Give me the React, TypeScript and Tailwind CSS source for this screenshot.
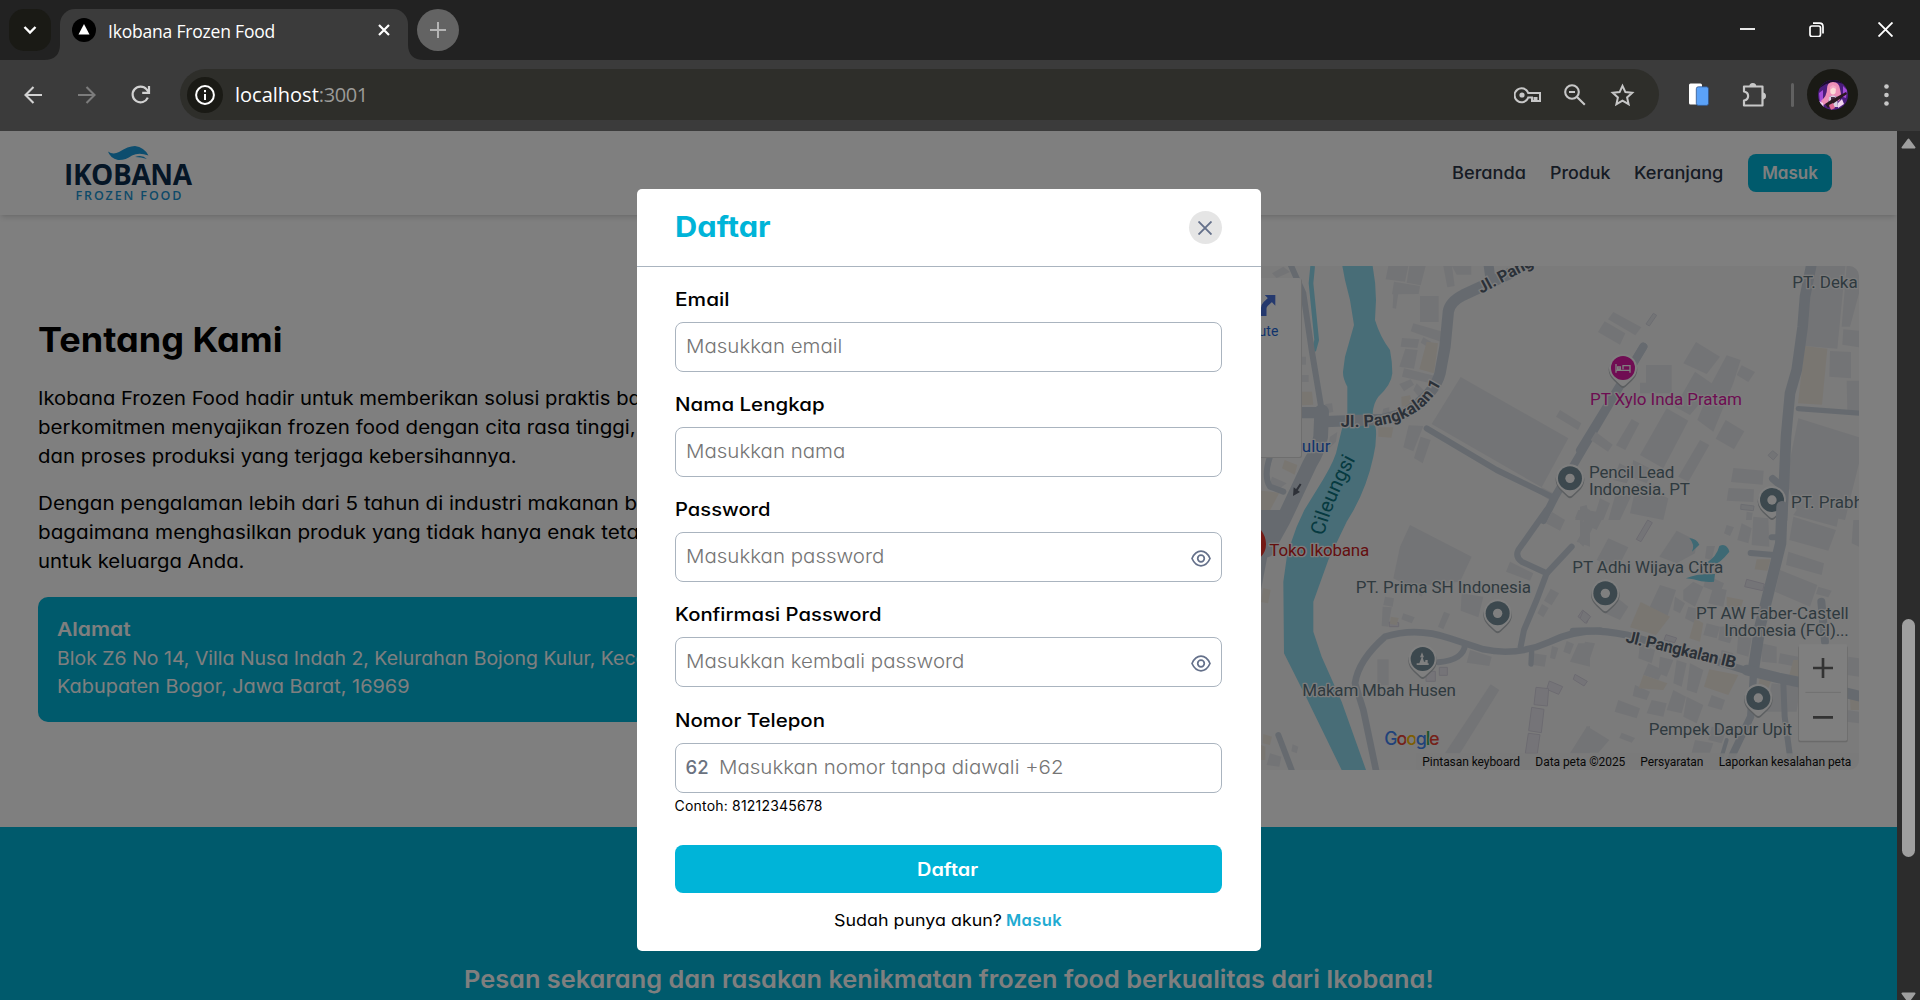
import type { ReactNode } from "react";

const P = ({ d, w = 20 }: { d: string; w?: number }) => (
  <path d={d} fill="none" stroke="#ccd5df" strokeWidth={w} strokeLinejoin="round" strokeLinecap="round" />
);

const Pin = ({ x, y, color = "#78909c", children }: { x: number; y: number; color?: string; children?: ReactNode }) => (
  <g transform={`translate(${x} ${y})`}>
    <path d="M-43 2A43 43 0 1 1 43 2Q42 20 27 34L7 53Q0 59 -7 53L-27 34Q-42 20 -43 2Z" fill="#b9bec2" transform="translate(0 4)" />
    <path d="M-42 0A42 42 0 1 1 42 0Q42 18 27 32L7 51Q0 57 -7 51L-27 32Q-42 18 -42 0Z" fill="#fff" />
    <circle r="36" fill={color} />
    {children ?? <circle r="14" fill="#fff" />}
  </g>
);

const T = ({ x, y, w, children, color = "#5f757f", size = 51 }: { x: number; y: number; w?: number; children: string; color?: string; size?: number }) => (
  <text x={x} y={y} textLength={w} fontSize={size} fill={color} stroke="#f8f8f8" strokeWidth="8" strokeLinejoin="round" paintOrder="stroke">
    {children}
  </text>
);

const Blocks = ({ list, fill = "#e7e8ec", stroke }: { list: string[]; fill?: string; stroke?: string }) => (
  <g fill={fill} stroke={stroke} strokeWidth="3">
    {list.map((points) => (
      <polygon key={points} points={points} />
    ))}
  </g>
);

function StreetMap() {
  return (
    <svg className="block h-full w-full rounded-[10px]" viewBox="967 266 892 504" fontFamily="Roboto, sans-serif">
      <rect x="967" y="266" width="892" height="504" fill="#f6f6f6" />
      {/* north-west quarter */}
      <g transform="translate(1250 250) scale(0.33333)">
        <Blocks
          list={[
            "415,48 475,48 465,95 407,88", "478,48 527,48 512,106 470,98", "432,95 510,108 506,132 426,133", "430,130 445,130 438,176 428,174",
            "510,138 566,138 566,216 510,216", "580,48 606,48 614,108 592,112", "606,48 664,48 664,74 620,74", "490,220 578,245 574,276 482,244",
            "456,264 508,268 502,294 452,290", "520,262 544,276 532,290 512,278", "466,296 503,300 492,356 448,350", "462,355 556,378 552,402 456,380",
            "448,402 482,388 492,404 462,424", "500,400 540,440 520,458 490,420", "400,476 418,472 418,496 396,494", "476,526 520,528 490,604 460,592",
            "512,560 542,570 518,640 492,624", "632,381 955,565 875,712 545,522", "930,480 994,520 984,540 918,500", "875,712 920,735 905,755 868,730",
            "1000,770 1020,780 1020,810 975,810", "226,462 246,460 250,486 228,490", "66,70 100,50 120,66 80,84", "154,320 168,320 168,344 154,344",
            "154,375 176,375 176,396 154,396", "240,560 262,546 258,575 232,600", "66,680 110,700 90,715 60,700",
          ]}
        />
        <Blocks fill="#f3ece2" list={["530,275 564,280 552,370 508,358", "385,532 430,532 424,563 385,560", "154,425 186,425 190,464 154,466", "454,440 480,436 490,465 455,470", "104,630 142,645 134,674 96,655", "33,722 88,728 50,800 33,800"]} />
        <path
          fill="#90daee"
          d="M277 48L368 48Q378 100 378 150L375 210Q390 260 420 300Q427 335 427 370Q424 405 385 440Q370 460 368 490L378 540Q380 580 370 620Q352 705 311 780L290 815L235 930L190 1055L190 1145L215 1220L275 1355L348 1560L275 1560L170 1345L102 1210L100 995L112 910L140 830L163 780L200 720Q245 650 258 610L275 540L292 490L292 410Q278 385 279 365L285 320L312 225L300 150L285 90Z"
        />
        <path d="M188 48L183 100L200 270L191 303" fill="none" stroke="#90daee" strokeWidth="14" />
        <P d="M120 40L160 130L185 300L215 480" w={18} />
        <P d="M140 488L215 488" w={34} />
        <P d="M215 485L212 560Q205 600 180 640L100 810L50 900" w={44} />
        <P d="M60 620Q40 680 60 710L100 725" w={18} />
        <P d="M225 515L400 508L470 488Q555 430 570 370L585 290L595 185Q600 155 640 135L780 70" w={34} />
        <P d="M715 40L722 90" w={30} />
        <P d="M530 535L740 660L915 745" w={18} />
        <P d="M880 810L915 740L1180 290" w={24} />
        <path id="pangkalan" d="M272 530L330 530Q520 528 580 385" fill="none" />
        <path id="river" d="M222 858Q240 770 325 612" fill="none" />
        <text fontSize="49" fontWeight="700" fill="#566271" stroke="#fafafa" strokeWidth="8" paintOrder="stroke" textLength="350">
          <textPath href="#pangkalan" textLength="350">Jl. Pangkalan 1</textPath>
        </text>
        <text fontSize="61" fill="#0d7480">
          <textPath href="#river">Cileungsi</textPath>
        </text>
        <text x="0" y="0" transform="translate(694 131) rotate(-28)" fontSize="49" fontWeight="700" fill="#566271" stroke="#fafafa" strokeWidth="8" paintOrder="stroke">
          Jl. Pangkalan
        </text>
        <T x={124} y={605} color="#1f68d8">Kulur</T>
        <path d="M152 702L139 722" stroke="#5c6370" strokeWidth="6" />
        <path d="M129 738L131 712L150 726Z" fill="#5c6370" />
        <rect x="-400" y="87" width="556" height="537" rx="6" fill="#dcdcdc" />
        <rect x="-400" y="84" width="553" height="537" rx="6" fill="#fff" />
        <path d="M41 198V176Q41 168 47 162L62 148" fill="none" stroke="#4a72dc" strokeWidth="17" />
        <path d="M44 135H76V167Z" fill="#4a72dc" />
        <text x="85" y="258" textAnchor="end" fontSize="42" fill="#1f68d8">Rute</text>
        <Pin x={960} y={685} />
      </g>
      {/* north-east quarter */}
      <g transform="translate(1580 250) scale(0.33333)">
        <Blocks
          list={[
            "100,186 184,232 166,256 84,208", "74,214 136,250 120,284 54,246", "348,276 420,320 380,372 310,340", "198,345 275,345 275,430 180,430 180,398 198,398",
            "440,316 482,330 460,400 400,545 352,510 385,430 330,495 285,470 345,365 395,400", "485,346 525,366 505,396 470,375", "260,475 325,512 250,655 180,615",
            "155,507 178,520 136,600 108,586", "437,510 493,544 462,598 407,566", "360,570 388,585 325,695 295,680", "40,540 98,584 84,605 32,570",
            "460,654 551,662 548,704 453,696", "446,714 522,718 520,756 440,752", "690,48 796,48 772,296 674,288", "800,48 837,48 837,130 810,230 785,230",
            "790,238 837,242 837,292 787,284", "750,303 813,306 813,385 748,380", "800,392 837,392 837,485 802,480", "655,505 837,562 837,640 795,810 650,780 618,690",
            "500,785 518,788 515,810 498,810", "118,640 160,660 140,700 100,690", "160,630 220,660 200,700 150,680", "0,770 20,765 30,810 0,810",
            "60,745 90,760 70,810 40,810", "110,720 155,735 120,810 85,810", "170,700 265,745 250,810 150,790",
          ]}
        />
        <Blocks stroke="#d9dbe3" list={["220,190 230,196 208,228 198,222", "578,602 593,614 580,630 564,616", "483,763 522,768 520,782 482,778"]} />
        <Blocks fill="#f3ece2" list={["674,288 742,296 726,464 654,460"]} />
        <P d="M0 600L190 290" w={24} />
        <P d="M695 40L675 140L668 230L650 360L630 430L618 560L612 700L606 810" w={32} />
        <P d="M655 476L845 490" w={16} />
        <P d="M578 686L606 710" w={22} />
        <T x={637} y={115} w={196}>PT. Deka</T>
        <T x={30} y={465} w={456} color="#db1aa4">PT Xylo Inda Pratam</T>
        <T x={27} y={685} w={256}>Pencil Lead</T>
        <T x={27} y={736} w={303}>Indonesia. PT</T>
        <Pin x={129} y={354} color="#e01ba6">
          <path d="M-21-12V14M-21 7H21M21 14V-7H0V4M-16-3h8v6h-8z" fill="none" stroke="#fff" strokeWidth="4" />
        </Pin>
        <Pin x={576} y={750} />
        <T x={633} y={775}>PT. Prabh</T>
      </g>
      {/* south-west quarter */}
      <g transform="translate(1250 510) scale(0.33333)">
        <Blocks
          list={[
            "480,45 665,140 630,215 530,225 515,260 470,225 430,205 450,110", "635,250 700,260 685,322 632,302", "405,260 432,265 428,290 400,285", "398,290 425,292 415,350 395,348",
            "460,310 494,322 485,340 454,328", "582,305 600,312 580,358 564,350", "382,448 416,448 416,526 382,526", "780,155 850,190 840,212 768,185",
            "902,236 927,250 905,286 882,272", "876,282 896,294 880,322 862,310", "660,420 725,440 718,468 650,458", "850,430 890,436 884,470 850,465",
            "906,408 925,414 915,448 900,444", "950,393 972,402 960,433 940,425", "722,523 748,540 630,730 585,730", "985,400 1020,400 1020,470 960,455",
            "905,5 945,30 930,62 888,40", "985,0 1010,0 1000,35 975,25", "1000,60 1020,40 1020,110 980,95", "60,730 94,740 88,770 50,765", "128,703 145,710 140,730 124,724",
            "1010,650 1020,648 1020,730 960,730",
          ]}
        />
        <Blocks stroke="#d9d6e2" fill="#ebe9f0" list={["998,300 1020,318 1010,340 984,320", "568,472 592,472 592,496 568,496", "528,484 556,484 556,514 528,514", "898,513 938,530 926,553 890,538", "858,532 896,536 892,588 852,584", "845,592 882,598 874,668 836,662", "835,670 870,674 862,730 826,730", "975,493 1012,514 1002,528 970,508", "418,336 446,338 446,350 418,350"]} />
        <Blocks fill="#f3ece2" list={["422,320 446,324 440,345 420,342", "40,234 62,240 54,280 33,276", "40,672 66,680 60,705 38,700", "33,705 46,710 46,750 33,750"]} />
        <path d="M33 0H120Q100 60 60 100Q50 150 33 240Z" fill="#ccd5df" />
        <P d="M380 790L340 600L315 520Q325 450 405 380Q500 350 600 385L700 418Q800 440 900 395Q960 365 1050 362" w={20} />
        <P d="M890 0L805 120Q795 140 815 155L890 190L965 110" w={18} />
        <P d="M890 190L860 270L822 360L812 410" w={18} />
        <P d="M565 457Q640 450 645 405" w={18} />
        <P d="M845 425L843 462" w={16} />
        <P d="M85 675L125 780" w={18} />
        <path d="M0 60H33Q48 80 48 102Q48 125 33 140H0Z" fill="#e8352b" />
        <T x={58} y={138} w={300} color="#c9211e">Toko Ikobana</T>
        <T x={317} y={249} w={526}>PT. Prima SH Indonesia</T>
        <Pin x={743} y={310} />
        <Pin x={518} y={447}>
          <path d="M-18 18V13H-10L-3-5L-8-5L-2-20L4-5L0-5L4 8H8V3H15V13H18V18Z" fill="#fff" />
        </Pin>
        <T x={157} y={558} w={461}>Makam Mbah Husen</T>
        <text x="403" y="706" fontSize="54" fontFamily="Inter, sans-serif" fontWeight="500" textLength="166" stroke="#f6f6f6" strokeWidth="6" paintOrder="stroke">
          <tspan fill="#4285f4">G</tspan><tspan fill="#ea4335">o</tspan><tspan fill="#fbbc04">o</tspan><tspan fill="#4285f4">g</tspan><tspan fill="#34a853">l</tspan><tspan fill="#ea4335">e</tspan>
        </text>
      </g>
      {/* south-east quarter */}
      <g transform="translate(1580 510) scale(0.33333)">
        <Blocks
          list={[
            "290,62 350,92 345,130 290,160 238,140", "85,85 145,112 110,180 50,150", "20,0 75,10 50,60 10,40", "0,30 40,50 10,110 0,100", "380,108 405,108 395,150 375,145",
            "440,45 462,52 450,78 432,70", "485,40 515,55 505,100 472,90", "520,20 565,25 568,110 515,105", "640,20 768,60 745,122 628,90", "650,0 780,0 770,50 640,15",
            "625,125 732,160 725,195 618,165", "600,180 712,225 690,290 585,245", "715,230 755,242 745,262 708,252", "820,30 837,30 837,110 815,100",
            "240,225 288,240 262,320 205,300", "310,240 340,215 370,230 345,290 310,270", "380,195 432,220 420,250 370,230", "400,230 440,240 430,290 385,280",
            "95,250 145,290 120,330 75,310", "15,395 45,400 25,460 0,450", "285,260 315,280 300,310 280,300", "325,290 370,300 345,340 315,325",
            "380,340 420,350 410,385 370,375", "420,350 470,345 450,400 415,390", "180,400 225,420 215,460 175,445", "205,460 250,480 235,510 190,495",
            "240,440 280,450 260,500 235,490", "290,450 320,460 305,530 280,520", "330,460 370,480 350,550 320,540", "165,525 210,545 200,570 158,558",
            "115,570 180,595 170,625 104,605", "215,570 260,580 250,620 200,610", "280,540 318,560 305,610 260,600", "320,560 370,585 350,640 310,620",
            "395,555 435,570 425,600 383,588", "20,648 88,690 55,728 0,728", "125,668 165,684 155,698 118,684", "395,650 440,660 425,700 385,690",
            "425,420 460,430 450,455 420,450", "475,375 515,385 505,440 470,430", "545,400 590,410 590,460 545,455", "600,430 655,440 650,470 595,460",
            "575,520 660,530 650,605 560,605", "805,440 837,445 837,500 802,495", "800,600 837,605 837,640 800,635", "345,690 400,700 390,728 335,728",
          ]}
        />
        <Blocks stroke="#d9d6e2" fill="#e9e9ee" list={["203,30 217,38 183,95 169,88", "500,208 553,222 548,242 494,230", "258,374 290,384 284,398 252,390", "10,302 32,320 16,340 0,325"]} />
        <Blocks fill="#f3ece2" list={["182,276 270,320 228,375 150,352", "345,325 370,340 360,395 328,385", "190,495 262,520 250,540 176,535", "388,478 475,495 445,555 372,530", "530,148 572,148 562,182 524,178", "440,260 490,270 480,300 440,290", "540,502 575,508 565,535 535,525", "640,450 657,450 657,500 628,495", "810,565 837,565 837,600 812,600"]} />
        <path d="M328 84Q350 86 358 104L336 125Q346 104 328 84ZM380 158Q410 140 418 108Q440 98 448 125Q420 160 400 165ZM318 205Q350 190 405 192L402 215Q370 218 340 208Z" fill="#7cd2e8" />
        <P d="M606 -10L602 100L575 210L540 350L520 480" w={34} />
        <P d="M575 82L600 82" w={18} />
        <P d="M512 129L590 136" w={18} />
        <P d="M724 275L735 395" w={24} />
        <P d="M-20 364Q60 358 140 375L330 430L500 482" w={22} />
        <P d="M500 480L600 505L700 525L845 560" w={32} />
        <P d="M520 500L512 620L455 740" w={22} />
        <P d="M610 520L614 620L630 740" w={18} />
        <P d="M440 690L425 740" w={12} />
        <T x={-23} y={190} w={453}>PT Adhi Wijaya Citra</T>
        <Pin x={76} y={250} />
        <T x={348} y={328} w={458}>PT AW Faber-Castell</T>
        <T x={433} y={379} w={373}>Indonesia (FCI)...</T>
        <text transform="translate(135 396) rotate(13.5)" fontSize="50" fontWeight="700" textLength="338" fill="#566271" stroke="#fafafa" strokeWidth="8" paintOrder="stroke">
          Jl. Pangkalan IB
        </text>
        <Pin x={535} y={564} />
        <T x={206} y={676} w={430}>Pempek Dapur Upit</T>
        <rect x="655" y="408" width="148" height="289" rx="5" fill="#d4d4d4" />
        <rect x="657" y="403" width="144" height="289" rx="4" fill="#fff" />
        <path d="M699 474H759M729 444V504M699 622H759" stroke="#666" strokeWidth="8" />
        <path d="M676 547H783" stroke="#e0e0e0" strokeWidth="3" />
        <rect x="-490" y="730" width="1327" height="50" fill="#f5f5f5" fillOpacity="0.8" />
        <g fontSize="36" fill="#111">
          <text x="-473" y="768" textLength="293">Pintasan keyboard</text>
          <text x="-134" y="768" textLength="270">Data peta ©2025</text>
          <text x="181" y="768" textLength="189">Persyaratan</text>
          <text x="416" y="768" textLength="398">Laporkan kesalahan peta</text>
        </g>
      </g>
    </svg>
  );
}

function TabStrip() {
  return (
    <div className="flex h-[60px] items-start bg-[#222222] pt-[9px] text-white">
      <div className="ml-[9px] flex h-[42px] w-[42px] items-center justify-center rounded-[15px] bg-[#1a1a15]">
        <svg width="14" height="10" viewBox="0 0 14 10"><path d="M1.5 2L7 7.5L12.5 2" fill="none" stroke="#fff" strokeWidth="2.4" /></svg>
      </div>
      <svg className="mt-[35px] ml-[-7px]" width="16" height="16" viewBox="0 0 16 16"><path d="M0 16Q16 16 16 0V16Z" fill="#3b3b3b" /></svg>
      <div className="flex h-[51px] w-[348px] items-start rounded-t-[15px] bg-[#3b3b3b]">
        <svg className="mt-[9px] ml-3" width="24" height="24" viewBox="0 0 24 24"><circle cx="12" cy="12" r="12" fill="#000" /><path d="M12 6L17.5 16.5H6.5Z" fill="#fff" /></svg>
        <span className="mt-[9px] ml-3 w-[250px] font-['Open_Sans'] text-[17.5px] leading-[26px] tracking-[-0.2px] whitespace-nowrap">Ikobana Frozen Food</span>
        <svg className="mt-[15px] ml-[20px]" width="12" height="12" viewBox="0 0 12 12"><path d="M1 1L11 11M11 1L1 11" stroke="#fff" strokeWidth="2.2" /></svg>
      </div>
      <svg className="mt-[35px]" width="16" height="16" viewBox="0 0 16 16"><path d="M16 16Q0 16 0 0V16Z" fill="#3b3b3b" /></svg>
      <div className="ml-[-7px] flex h-[42px] w-[42px] items-center justify-center rounded-full bg-[#636363]">
        <svg width="16" height="16" viewBox="0 0 16 16"><path d="M0 8H16M8 0V16" stroke="#b4b4b4" strokeWidth="2" /></svg>
      </div>
      <div className="mt-[13px] mr-[27px] ml-auto flex gap-[54px]">
        <svg width="15" height="15" viewBox="0 0 15 15"><path d="M0 7H15" stroke="#fff" strokeWidth="1.8" /></svg>
        <svg width="15" height="15" viewBox="0 0 15 15" fill="none" stroke="#fff" strokeWidth="1.7"><rect x="1" y="4" width="10.5" height="10.5" rx="2" /><path d="M4 1.2H10.5Q14 1.2 14 4.7V11.5" /></svg>
        <svg width="15" height="15" viewBox="0 0 15 15"><path d="M0.5 0.5L14.5 14.5M14.5 0.5L0.5 14.5" stroke="#fff" strokeWidth="1.9" /></svg>
      </div>
    </div>
  );
}

function Toolbar() {
  return (
    <div className="flex h-[71px] items-center bg-[#3b3b3b] pb-[2px]">
      <svg className="ml-6" width="18" height="18" viewBox="0 0 18 18" fill="none" stroke="#d2d2d2" strokeWidth="2.1"><path d="M18 9H1.5M9.5 1L1.5 9L9.5 17" /></svg>
      <svg className="ml-9" width="18" height="18" viewBox="0 0 18 18" fill="none" stroke="#7c7c7c" strokeWidth="2.1"><path d="M0 9H16.5M8.5 1L16.5 9L8.5 17" /></svg>
      <svg className="ml-[35px]" width="20" height="20" viewBox="0 0 20 20" fill="none" stroke="#d2d2d2" strokeWidth="2.2"><path d="M16.8 12.6A7.9 7.9 0 1 1 15.6 4.4L17.5 6.8" /><path d="M18 1V7.8H11.2" /></svg>
      <div className="ml-[29px] flex h-[51px] w-[1479px] items-center rounded-full bg-[#2e2e2a]">
        <div className="ml-[7px] flex h-[36px] w-[36px] items-center justify-center rounded-full bg-[#1a1a15]">
          <svg width="20" height="20" viewBox="0 0 20 20" fill="none" stroke="#fff" strokeWidth="2"><circle cx="10" cy="10" r="8.9" /><path d="M10 9V15M10 5V7.2" /></svg>
        </div>
        <span className="ml-[12px] font-['Open_Sans'] text-[20px] leading-[28px] text-white">localhost</span>
        <span className="font-['Open_Sans'] text-[20px] leading-[28px] tracking-[-0.4px] text-[#9b9b98]">:3001</span>
        <svg className="ml-auto" width="28" height="18" viewBox="0 0 28 18" fill="none" stroke="#c7c7c7" strokeWidth="2"><path d="M14.2 7A7 7 0 1 0 14.2 11.5H18V15H20.5V12H22.5V15H26V7Z" /><circle cx="8" cy="9" r="2.6" fill="#c7c7c7" stroke="none" /></svg>
        <svg className="ml-[22px]" width="22" height="22" viewBox="0 0 22 22" fill="none" stroke="#c7c7c7" strokeWidth="2.1"><circle cx="8" cy="8" r="6.8" /><path d="M13 13L20.8 20.8M5 8H11" /></svg>
        <svg className="mr-[24px] ml-[24px]" width="25" height="24" viewBox="0 0 25 24" fill="none" stroke="#c7c7c7" strokeWidth="2"><path d="M12.5 2.8L15.4 9.1L22.2 9.8L17.1 14.4L18.6 21.2L12.5 17.7L6.4 21.2L7.9 14.4L2.8 9.8L9.6 9.1Z" /></svg>
      </div>
      <svg className="ml-[30px]" width="20" height="23" viewBox="0 0 20 23"><rect x="0" y="0.5" width="13" height="21" rx="1.5" fill="#fff" /><rect x="7.3" y="3.8" width="12.2" height="18.6" rx="2" fill="#5ba2f8" stroke="#31558c" strokeWidth="0.8" /></svg>
      <svg className="ml-[32px]" width="26" height="26" viewBox="0 0 26 26"><path d="M3 4.5H21.5V23.5H3V18.5C8.500 17.500 8.500 10.500 3 9.500Z" fill="none" stroke="#c7c7c7" strokeWidth="2.2" strokeLinejoin="round" /><path d="M8.3 4.500A3.500 3.500 0 0 1 15.300 4.500ZM21.500 10.500A3.500 3.500 0 0 1 21.500 17.500Z" fill="#c7c7c7" /></svg>
      <div className="ml-[24px] h-6 w-[3px] rounded-full bg-[#616161]" />
      <div className="ml-[13px] flex h-[51px] w-[51px] items-center justify-center rounded-full bg-[#1a1a15]">
        <svg width="30" height="30" viewBox="0 0 30 30" className="rounded-full">
          <rect width="30" height="30" fill="#4b1d7c" />
          <path d="M0 0H30V5L18 2L8 4L0 9Z" fill="#1d0d30" />
          <path d="M1 13L5 10L5 22L2 24ZM25 6L29 10L28 18L25 17Z" fill="#a34bd8" />
          <path d="M9 9Q9 2 15 2Q21 2 22 9L23 14L21 22L18 16H12L10 23L5 25L3 21Q9 16 9 9Z" fill="#ee8fb8" />
          <path d="M12 8Q15 5 18 8L17.500 13Q15 16 12.500 13Z" fill="#fbdcd8" />
          <path d="M12 7L15 5L18.500 7L18 9L15 7.500L12 10Z" fill="#f3a6c6" />
          <path d="M11 17Q15 14 19 17L20 27H10Z" fill="#d9cfe0" />
          <path d="M13 17L17 17L16 21L13 22Z" fill="#4a3048" />
          <path d="M7 24L13 20L28 12L29 14L16 23L10 28Z" fill="#2a1820" />
          <path d="M1 21L5 23L6 28L2 25ZM20 23L24 19L26 24L20 28Z" fill="#f3d6f0" />
          <path d="M11 25L15 23L17 28L13 30Z" fill="#e06a94" />
        </svg>
      </div>
      <svg className="ml-[26px]" width="5" height="22" viewBox="0 0 5 22" fill="#c7c7c7"><circle cx="2.500" cy="2.500" r="2.300" /><circle cx="2.500" cy="11" r="2.300" /><circle cx="2.500" cy="19.500" r="2.300" /></svg>
    </div>
  );
}

function Logo() {
  return (
    <svg width="130" height="58" viewBox="62 144 130 58" fontFamily="Open Sans, sans-serif">
      <path d="M107 151.500Q112 155 118 152Q127 146 134 146Q143 147 147.500 155.500Q138 152 131 155.500Q124 160.500 117 160Q109 158 107 151.500Z" fill="#1a9bdc" />
      <path d="M134 157Q141 154 146 159Q140 157 134 157Z" fill="#1a9bdc" />
      <text x="63" y="185.300" fontSize="28" fontWeight="700" textLength="128" fill="#0b2c4d">IKOBANA</text>
      <text x="74.500" y="199.700" fontSize="12.500" fontWeight="600" textLength="106" fill="#1a94d2">FROZEN FOOD</text>
    </svg>
  );
}

function Eye() {
  return (
    <svg className="absolute top-[17px] right-[10px]" width="20" height="17" viewBox="0 0 20 17" fill="none" stroke="#64708a" strokeWidth="1.700">
      <path d="M1 8.500C3 4 6 1.200 10 1.200S17 4 19 8.500C17 13 14 15.800 10 15.800S3 13 1 8.500Z" />
      <circle cx="10" cy="8.500" r="3.300" />
    </svg>
  );
}

function Field({ label, labelCls, hint, eye, prefix }: { label: string; labelCls: string; hint: string; eye?: boolean; prefix?: string }) {
  return (
    <div className="flex flex-col gap-2">
      <label className={`w-fit origin-left text-[18px] leading-[29px] font-medium whitespace-nowrap ${labelCls}`}>{label}</label>
      <div className="relative flex h-[50px] items-center rounded-lg border border-[#aab4bf] bg-white pl-[10px]">
        {prefix && <span className="w-[33px] text-[18.5px] font-medium text-[#6b7280]">{prefix}</span>}
        <span className="origin-left scale-x-[1.107] text-[18.5px] font-light whitespace-nowrap text-[#757575]">{hint}</span>
        {eye && <Eye />}
      </div>
    </div>
  );
}

function RegisterModal() {
  return (
    <div className="h-[762px] w-[624px] rounded-[5px] bg-white">
      <div className="flex h-[78px] items-center justify-between border-b border-[#aab4bf] pr-[39px] pl-[38px]">
        <h2 className="origin-left scale-x-[1.08] text-[28.5px] font-bold text-[#00b4d8]">Daftar</h2>
        <button className="flex h-[33px] w-[33px] items-center justify-center rounded-full bg-[#e5e5e5]">
          <svg width="14" height="14" viewBox="0 0 14 14"><path d="M0.500 0.500L13.500 13.500M13.500 0.500L0.500 13.500" stroke="#64708a" strokeWidth="1.900" /></svg>
        </button>
      </div>
      <div className="pt-[18px] pr-[39px] pl-[38px]">
        <div className="flex flex-col gap-[18px]">
          <Field label="Email" labelCls="scale-x-[1.16]" hint="Masukkan email" />
          <Field label="Nama Lengkap" labelCls="scale-x-[1.139]" hint="Masukkan nama" />
          <Field label="Password" labelCls="scale-x-[1.121]" hint="Masukkan password" eye />
          <Field label="Konfirmasi Password" labelCls="scale-x-[1.127]" hint="Masukkan kembali password" eye />
        </div>
        <div className="mt-[19px]">
          <Field label="Nomor Telepon" labelCls="scale-x-[1.137]" hint="Masukkan nomor tanpa diawali +62" prefix="62" />
        </div>
        <p className="mt-[3px] text-[14px] leading-[20px] tracking-[0.2px]">Contoh: 81212345678</p>
        <button className="mt-[29px] flex h-12 w-full items-center justify-center rounded-lg bg-[#00b4d8] text-[18px] font-semibold text-white">
          <span className="scale-x-[1.11]">Daftar</span>
        </button>
        <p className="mt-[15px] flex justify-center gap-[5px] text-[16.5px] leading-[24px]">
          <span className="w-[167px]"><span className="inline-block origin-left scale-x-[1.083] whitespace-nowrap">Sudah punya akun?</span></span>
          <span className="font-semibold tracking-[0.4px] text-[#1fabd2]">Masuk</span>
        </p>
      </div>
    </div>
  );
}

function Page() {
  return (
    <div className="h-full w-[1897px] overflow-hidden bg-white">
      <header className="relative flex h-[84px] items-center justify-between bg-white pr-[65px] pl-[63px] shadow-md">
        <Logo />
        <nav className="flex items-center text-[17px] font-medium text-[#2d3748]">
          <span className="w-[98px] pt-[2px]"><span className="inline-block origin-left scale-x-[1.07]">Beranda</span></span>
          <span className="w-[84px] pt-[2px]"><span className="inline-block origin-left scale-x-[1.05]">Produk</span></span>
          <span className="w-[114px] pt-[2px]"><span className="inline-block origin-left scale-x-[1.07]">Keranjang</span></span>
          <span className="flex h-[38px] w-[84px] items-center justify-center rounded-lg bg-[#00b4d8] pt-px font-semibold text-white">Masuk</span>
        </nav>
      </header>
      <section className="flex h-[612px] items-start gap-[38px] px-[38px] pt-[51px]">
        <div className="w-[891px] shrink-0 pt-[50px] text-[18.5px] leading-[28.8px] whitespace-nowrap text-black">
          <h1 className="origin-left scale-x-[1.061] text-[34px] leading-[48px] font-bold">Tentang Kami</h1>
          <div className="mt-[20px] flex flex-col">
            <span className="origin-left scale-x-[1.093]">Ikobana Frozen Food hadir untuk memberikan solusi praktis bagi keluarga. Kami</span>
            <span className="origin-left scale-x-[1.109]">berkomitmen menyajikan frozen food dengan cita rasa tinggi, bahan pilihan,</span>
            <span className="origin-left scale-x-[1.1]">dan proses produksi yang terjaga kebersihannya.</span>
          </div>
          <div className="mt-[19px] flex flex-col">
            <span className="origin-left scale-x-[1.115]">Dengan pengalaman lebih dari 5 tahun di industri makanan beku, kami paham</span>
            <span className="origin-left scale-x-[1.117]">bagaimana menghasilkan produk yang tidak hanya enak tetapi juga aman</span>
            <span className="origin-left scale-x-[1.1]">untuk keluarga Anda.</span>
          </div>
          <div className="mt-[21px] flex h-[125px] flex-col rounded-[10px] bg-[#00b4d8] px-[19px] pt-[18px] text-white">
            <span className="origin-left scale-x-[1.14] font-semibold">Alamat</span>
            <span className="origin-left scale-x-[1.053]">Blok Z6 No 14, Villa Nusa Indah 2, Kelurahan Bojong Kulur, Kecamatan Gunung Putri,</span>
            <span className="origin-left scale-x-[1.077]">Kabupaten Bogor, Jawa Barat, 16969</span>
          </div>
        </div>
        <div className="h-[504px] w-[892px] shrink-0"><StreetMap /></div>
      </section>
      <section className="flex h-[173px] justify-center bg-[#00b4d8] pt-[136px]">
        <h2 className="scale-x-[1.034] text-[24.5px] leading-[32px] font-semibold whitespace-nowrap text-white">
          Pesan sekarang dan rasakan kenikmatan frozen food berkualitas dari Ikobana!
        </h2>
      </section>
    </div>
  );
}

export default function App() {
  return (
    <div className="flex h-[1000px] w-[1920px] flex-col overflow-hidden font-[Inter] [font-feature-settings:'cv11']">
      <TabStrip />
      <Toolbar />
      <div className="flex h-[869px]">
        <div className="relative h-full w-[1897px]">
          <Page />
          <div className="absolute inset-0 flex items-start justify-center bg-black/50 pt-[58px] text-black">
            <RegisterModal />
          </div>
        </div>
        <div className="flex w-[23px] flex-col items-center bg-[#2c2c2c]">
          <svg className="mt-[7px]" width="15" height="11" viewBox="0 0 15 11"><path d="M7.500 1.500L13.500 9.500H1.500Z" fill="#9f9f9f" stroke="#9f9f9f" strokeWidth="2" strokeLinejoin="round" /></svg>
          <div className="mt-[470px] h-[238px] w-[13px] rounded-full bg-[#9f9f9f]" />
          <svg className="mt-[135px]" width="15" height="8" viewBox="0 0 15 8"><path d="M1.500 1.500H13.500L7.500 9.500Z" fill="#9f9f9f" stroke="#9f9f9f" strokeWidth="2" strokeLinejoin="round" /></svg>
        </div>
      </div>
    </div>
  );
}
